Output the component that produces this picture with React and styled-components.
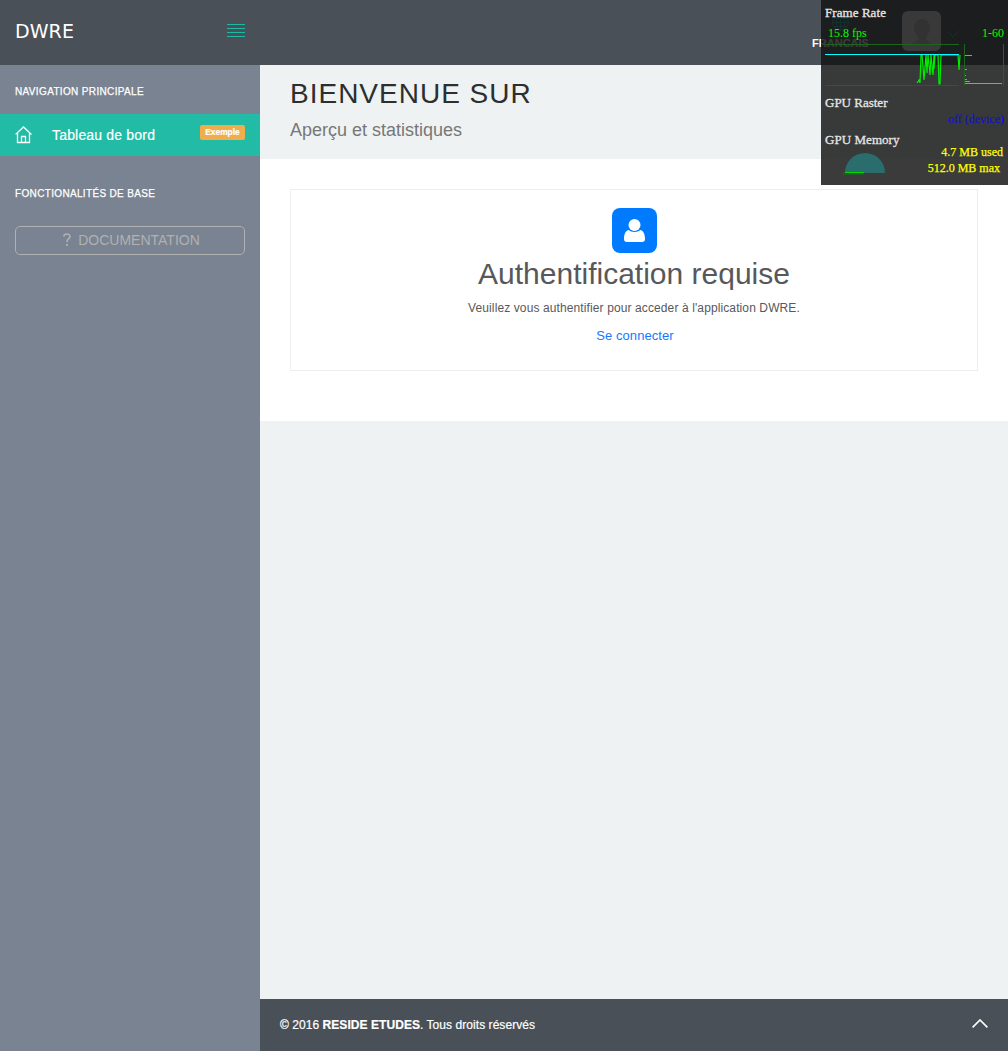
import React from "react";
import styled, { createGlobalStyle } from "styled-components";

const Global = createGlobalStyle`
  * { box-sizing: border-box; }
  body { margin: 0; font-family: "Liberation Sans", Arial, sans-serif; color: #58585a; }
  h1, h2, p { margin: 0; font-weight: 400; }
`;

const Page = styled.div`
  position: relative;
  width: 1008px;
  height: 1051px;
  overflow: hidden;
  display: grid;
  grid-template: 65px 1fr / 260px 1fr;
  background: #eef2f3;
`;
const Header = styled.header`
  grid-column: 1 / 3;
  display: flex;
  justify-content: space-between;
  background: #495057;
`;
const Brand = styled.div`
  width: 260px;
  padding: 0 15px;
  display: flex;
  align-items: center;
  justify-content: space-between;
  color: #fff;
  font: 19px/61px "DejaVu Sans", sans-serif;
  letter-spacing: 0.1px;
  span { padding-bottom: 3px; line-height: 22px; }
  svg { display: block; margin-bottom: 4px; }
`;
const HeaderMenu = styled.div`
  display: flex;
  width: 196px;
`;
const Language = styled.div`
  width: 57px;
  display: flex;
  flex-direction: column;
  align-items: center;
  padding-top: 14px;
  color: #fff;
  font-size: 11px;
  font-weight: 700;
  line-height: 13px;
  white-space: nowrap;
  svg { display: block; margin-bottom: 6px; }
`;
const Avatar = styled.div`
  width: 39px;
  height: 40px;
  margin: 11px 5px 0 33px;
  border-radius: 6px;
  background: #f0f0f0;
  svg { display: block; }
`;
const Sidebar = styled.nav`
  background: #7a8391;
  color: #fff;
`;
const NavTitle = styled.div`
  height: ${(p) => p.$height}px;
  padding: ${(p) => p.$top}px 15px 0;
  font-size: 10px;
  line-height: 14px;
  letter-spacing: ${(p) => p.$spacing}px;
  -webkit-text-stroke: 0.25px #fff;
`;
const NavItem = styled.div`
  height: 42px;
  padding: 0 15px;
  display: flex;
  align-items: center;
  background: #21bba6;
  font-size: 14px;
  -webkit-text-stroke: 0.2px #fff;
  svg { display: block; }
`;
const NavLabel = styled.span`
  margin-left: 19px;
  flex: 1;
  letter-spacing: 0.18px;
  padding-bottom: 1px;
`;
const Badge = styled.span`
  width: 45px;
  height: 15px;
  margin-bottom: 5px;
  border-radius: 2px;
  background: #f0ad4e;
  font-size: 8.4px;
  font-weight: 700;
  line-height: 15px;
  text-align: center;
`;
const DocButton = styled.button`
  display: flex;
  width: 230px;
  height: 29px;
  margin: 0 15px;
  align-items: center;
  justify-content: center;
  gap: 7px;
  padding: 0 0 0 3px;
  border: 1px solid #b1b1b1;
  border-radius: 5px;
  background: transparent;
  color: #b1b1b1;
  font: 14px/27px "Liberation Sans", Arial, sans-serif;
  svg { margin-bottom: 2px; }
`;
const Main = styled.main`
  display: flex;
  flex-direction: column;
`;
const Heading = styled.section`
  height: 94px;
  padding: 12px 30px 0;
`;
const Title = styled.h1`
  color: #2c2e2f;
  font-size: 28px;
  line-height: 33px;
  letter-spacing: 1px;
`;
const Subtitle = styled.p`
  margin-top: 9px;
  color: #777;
  font-size: 18px;
  line-height: 22px;
`;
const Content = styled.section`
  height: 262px;
  padding: 30px;
  background: #fff;
`;
const Card = styled.div`
  height: 182px;
  border: 1px solid #eeeeee;
  display: flex;
  flex-direction: column;
  align-items: center;
  padding-top: 18px;
`;
const UserTile = styled.div`
  width: 45px;
  height: 45px;
  border-radius: 8px;
  background: #007bff;
  svg { display: block; }
`;
const CardTitle = styled.h2`
  margin-top: 3px;
  font-size: 30px;
  line-height: 35px;
`;
const CardText = styled.p`
  margin-top: 8px;
  font-size: 12px;
  line-height: 18px;
  letter-spacing: 0.11px;
`;
const Login = styled.a`
  margin: 10px 0 0 2px;
  color: #1677ff;
  font-size: 13px;
  line-height: 18px;
  letter-spacing: 0.06px;
`;
const Footer = styled.footer`
  height: 52px;
  margin-top: auto;
  padding: 0 20px;
  display: flex;
  align-items: center;
  justify-content: space-between;
  background: #495057;
  color: #fff;
  font-size: 12px;
  letter-spacing: 0.055px;
  -webkit-text-stroke: 0.2px #fff;
  svg { display: block; margin-bottom: 4px; }
`;
const Monitor = styled.aside`
  position: absolute;
  top: 0;
  right: 0;
  width: 187px;
  height: 185px;
  padding: 5px 4px 0;
  background: rgba(19, 19, 19, 0.83);
  color: #e6e6e6;
  font: 13px/16px "Liberation Serif", serif;
  white-space: nowrap;
`;
const Label = styled.div`
  margin-top: ${(p) => p.$top || 0}px;
  letter-spacing: ${(p) => p.$spacing || 0}px;
  -webkit-text-stroke: 0.3px #e6e6e6;
`;
const Rates = styled.div`
  display: flex;
  justify-content: space-between;
  margin-top: 4px;
  padding-left: 3px;
  color: #00ff00;
  font-size: 12px;
`;
const Graph = styled.svg`
  display: block;
  margin-top: 2px;
`;
const Value = styled.div`
  text-align: right;
  color: ${(p) => p.$color};
  font-size: 12px;
  padding-right: ${(p) => p.$right || 0}px;
  -webkit-text-stroke: ${(p) => p.$stroke || 0}px ${(p) => p.$color};
`;
const Memory = styled.div`
  display: flex;
  justify-content: space-between;
  margin-top: -4px;
  svg { display: block; margin: 9px 0 0 17px; }
`;

const lineIcon = { fill: "none", stroke: "currentColor" };

export default function App() {
  return (
    <>
      <Global />
      <Page>
        <Header>
          <Brand>
            <span>DWRE</span>
            <svg width="18" height="13" fill="#1fbba6">
              <path d="M0 0h18v1H0zM0 4h18v1H0zM0 8h18v1H0zM0 12h18v1H0z" />
            </svg>
          </Brand>
          <HeaderMenu>
            <Language>
              <svg width="17" height="17" color="#21bba6" {...lineIcon}>
                <circle cx="8.5" cy="8.5" r="8" />
                <ellipse cx="8.5" cy="8.5" rx="4" ry="8" />
                <path d="M8.5 0v17M0 8.5h17M2 4.5h13M2 12.5h13" />
              </svg>
              FRANCAIS
            </Language>
            <Avatar>
              <svg width="39" height="40" fill="#c8c8c8">
                <path d="M20 8c-5 0-8 4-8 9 0 4 2 6 4 9 1 3-3 5-6 7v1h20v-1c-3-2-7-4-6-7 2-3 4-5 4-9 0-5-3-9-8-9z" />
              </svg>
            </Avatar>
            <svg width="14" height="65" color="#21bba6" {...lineIcon}>
              <path d="M1 31l6 6 6-6" />
            </svg>
          </HeaderMenu>
        </Header>
        <Sidebar>
          <NavTitle $height={49} $top={20} $spacing={0.35}>NAVIGATION PRINCIPALE</NavTitle>
          <NavItem>
            <svg width="18" height="18" {...lineIcon}>
              <path d="M.6 8.4L8.5 1l8 7.4M2.5 7v9.500h12V7M6.500 16.500v-6h4v6" strokeWidth="1.3" />
            </svg>
            <NavLabel>Tableau de bord</NavLabel>
            <Badge>Exemple</Badge>
          </NavItem>
          <NavTitle $height={70} $top={31} $spacing={0.34}>FONCTIONALITÉS DE BASE</NavTitle>
          <DocButton>
            <svg width="8" height="13" {...lineIcon} strokeWidth="1.6">
              <path d="M.8 3.5C1 .2 7 .1 7 3.5 7 6 4 5.5 4 9M4 10.7V13" />
            </svg>
            DOCUMENTATION
          </DocButton>
        </Sidebar>
        <Main>
          <Heading>
            <Title>BIENVENUE SUR</Title>
            <Subtitle>Aperçu et statistiques</Subtitle>
          </Heading>
          <Content>
            <Card>
              <UserTile>
                <svg width="45" height="45" fill="#fff">
                  <path d="M16.5 22C13 23 12 27 12 31c0 2 1 3 3 3h15c2 0 3-1 3-3 0-4-1-8-4.500-9-3 2.600-9 2.600-12 0z" />
                  <circle cx="22.500" cy="17" r="6" />
                </svg>
              </UserTile>
              <CardTitle>Authentification requise</CardTitle>
              <CardText>Veuillez vous authentifier pour acceder à l'application DWRE.</CardText>
              <Login>Se connecter</Login>
            </Card>
          </Content>
          <Footer>
            <span>© 2016 <b>RESIDE ETUDES</b>. Tous droits réservés</span>
            <svg width="16" height="9" {...lineIcon} strokeWidth="1.6">
              <path d="M.6 8.400L8 1l7.400 7.400" />
            </svg>
          </Footer>
        </Main>
        <Monitor>
          <Label $spacing={0.07}>Frame Rate</Label>
          <Rates><span>15.8 fps</span><span>1-60</span></Rates>
          <Graph width="182" height="44" fill="none">
            <path d="M0 1.500h134M0 42.500h134M139.500 1v42M178.500 1v42" stroke="#1d651d" />
            <path d="M92 40l2-3 1 3 1-28h1l2 25 2-25 1 18 1-18 2 20 1-20 2 20 1-20v14l1-14h3l1 29h1l1-29h17l1 15 1-15" stroke="#00ed00" strokeWidth="1.200" />
            <path d="M0 11.500h134" stroke="#00ffff" />
            <path d="M140 12.500h7M140 26.500h2M140 32.500h1M140 36.500h2M140 38.500h5M140 40.500h37" stroke="#00ff00" />
          </Graph>
          <Label $top={8}>GPU Raster</Label>
          <Value $color="#0b0be0">off (device)</Value>
          <Label $top={5} $spacing={0.05}>GPU Memory</Label>
          <Memory>
            <svg width="45" height="24">
              <path d="M3 20a20 20 0 0 1 40 0z" fill="#2b6c6c" />
              <path d="M1 19h21v3H1z" fill="#27572b" />
              <path d="M3 19.500h19" stroke="#00d800" />
            </svg>
            <div>
              <Value $color="#ffff00" $stroke={0.25} $right={1}>4.7 MB used</Value>
              <Value $color="#ffff00" $stroke={0.25} $right={4}>512.0 MB max</Value>
            </div>
          </Memory>
        </Monitor>
      </Page>
    </>
  );
}
